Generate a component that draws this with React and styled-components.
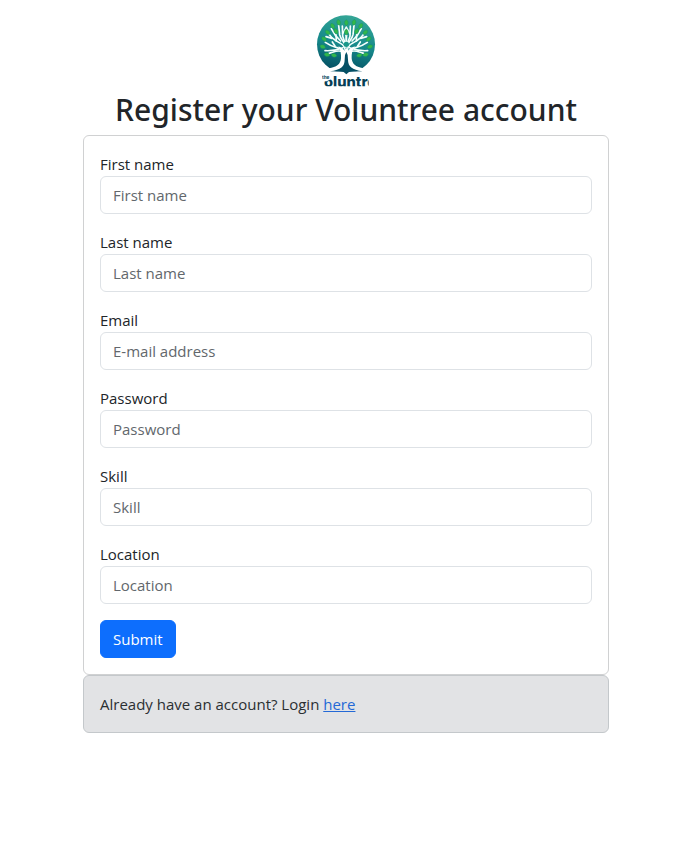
import React from 'react';
import styled, { createGlobalStyle } from 'styled-components';

const GlobalStyle = createGlobalStyle`
  *, *::before, *::after { box-sizing: border-box; }
  body {
    margin: 0;
    background: #fff;
    color: #212529;
    font-family: "Segoe UI", "Open Sans", "Noto Sans", sans-serif;
    font-size: 15px;
    line-height: 24px;
  }
`;

const Page = styled.main`
  display: flex;
  flex-direction: column;
  align-items: center;
  padding: 14px 16px 24px 12px;
`;

const Logo = styled.svg`
  display: block;
  width: 60px;
  height: 75px;
`;

const Title = styled.h1`
  margin: 0 0 4px;
  font-family: "Segoe UI", "Noto Sans", "Open Sans", sans-serif;
  font-size: 30px;
  font-weight: 500;
  line-height: 42px;
  text-align: center;
`;

const Card = styled.form`
  display: flex;
  flex-direction: column;
  align-items: flex-start;
  gap: 16px;
  width: 100%;
  max-width: 526px;
  padding: 16px;
  border: 1px solid #d0d1d2;
  border-radius: 6px;
`;

const Field = styled.div`
  display: flex;
  flex-direction: column;
  align-items: flex-start;
  width: 100%;
`;

const Input = styled.input`
  width: 100%;
  height: 38px;
  padding: 6px 12px;
  border: 1px solid #dee2e6;
  border-radius: 6px;
  background: #fff;
  color: #212529;
  font: inherit;

  &::placeholder { color: #62676c; opacity: 1; }
`;

const SubmitButton = styled.button`
  height: 38px;
  padding: 6px 12px;
  border: 1px solid #0d6efd;
  border-radius: 6px;
  background: #0d6efd;
  color: #fff;
  font: inherit;
  cursor: pointer;
`;

const LoginNote = styled.p`
  width: 100%;
  max-width: 526px;
  margin: 0;
  padding: 16px;
  border: 1px solid #c4c8cb;
  border-radius: 6px;
  background: #e2e3e5;
  color: #2b2f32;
`;

const Link = styled.a`
  color: #2469d6;
  text-decoration: underline;
`;

const fields = [
  { id: 'first-name', label: 'First name', placeholder: 'First name', type: 'text' },
  { id: 'last-name', label: 'Last name', placeholder: 'Last name', type: 'text' },
  { id: 'email', label: 'Email', placeholder: 'E-mail address', type: 'email' },
  { id: 'password', label: 'Password', placeholder: 'Password', type: 'password' },
  { id: 'skill', label: 'Skill', placeholder: 'Skill', type: 'text' },
  { id: 'location', label: 'Location', placeholder: 'Location', type: 'text' },
];

// Each leaf: centre x, centre y, rotation in degrees.
const leaves = [
  [121, 44, 0], [98, 43, -15], [144, 43, 15], [80, 54, -35], [164, 54, 35],
  [121, 72, 0], [90, 70, -25], [152, 70, 25], [65, 73, -50], [178, 73, 50],
  [54, 93, -50], [188, 93, 50], [50, 116, -70], [192, 116, 70],
  [63, 140, -75], [179, 140, 75], [84, 142, -75], [160, 142, 75],
];

// Right-hand branches, mirrored about the trunk for the left side.
const branches = [
  'M124 128C126 112 134 108 151 99Q166 90 172 80',
  'M127 131C136 117 158 122 184 103',
  'M131 119Q158 130 185 128',
  'M127 132Q145 126 160 132L173 136',
  'M123 117C126 100 138 96 141 80L144 52',
  'M138 99L154 82L166 62',
  'M124 107L132 85L133 54',
  'M121 103V82',
  'M151 99L152 80',
  'M164 91L182 86',
  'M155 114L163 102',
  'M132 77L121 58',
];

function VoluntreeLogo() {
  const crown = branches.map((d) => <path key={d} d={d} />);
  return (
    <Logo viewBox="30 18 180 225" role="img" aria-label="The Voluntree">
      <defs>
        <linearGradient id="disc" x1="0.6" y1="0" x2="0.4" y2="1">
          <stop offset="0" stopColor="#35a696" />
          <stop offset="0.5" stopColor="#16898b" />
          <stop offset="1" stopColor="#034b60" />
        </linearGradient>
        <clipPath id="badge"><path d="M30 18H210V190H30Z" /></clipPath>
        <clipPath id="wordmark"><path d="M48 202H188V235H48Z" /></clipPath>
      </defs>
      <g clipPath="url(#badge)">
        <circle cx="120" cy="109" r="87" fill="url(#disc)" />
        <g fill="none" stroke="#f4fffc" strokeWidth="5" strokeLinecap="round" strokeLinejoin="round">
          <g>{crown}</g>
          <g transform="translate(242 0) scale(-1 1)">{crown}</g>
        </g>
        <path fill="#fff" d="M97 115Q112 121 115 130L121 119L127 130Q130 121 147 115Q136 129 137 151C138 168 150 178 174 181L192 190H50L68 181C92 178 104 168 105 151Q106 129 97 115Z" />
        <circle cx="121" cy="109" r="8" fill="#19988a" />
        <g fill="#32b64c" stroke="#129060" strokeWidth="1">
          {leaves.map(([x, y, angle]) => (
            <path
              key={`${x}-${y}`}
              transform={`translate(${x} ${y}) rotate(${angle})`}
              d="M0-9C8-4 7 5 0 9C-7 5-8-4 0-9Z"
            />
          ))}
        </g>
      </g>
      <path fill="#055065" d="M121 132Q115 140 116 155C116 175 105 185 72 190Q102 190 113 192L121 199L129 192Q140 190 170 190C138 185 126 175 126 155Q127 140 121 132Z" />
      <g clipPath="url(#wordmark)" fill="#073f57" fontFamily="Inter, sans-serif">
        <text x="54" y="238" fontSize="44" fontWeight="800">oluntre</text>
        <path fill="#fff" d="M48 202H75V214L62 220H48Z" />
        <text x="48" y="213" fontSize="14" fontWeight="700">the</text>
      </g>
    </Logo>
  );
}

export default function App() {
  return (
    <>
      <GlobalStyle />
      <Page>
        <VoluntreeLogo />
        <Title>Register your Voluntree account</Title>
        <Card onSubmit={(event) => event.preventDefault()}>
          {fields.map(({ id, label, placeholder, type }) => (
            <Field key={id}>
              <label htmlFor={id}>{label}</label>
              <Input id={id} name={id} type={type} placeholder={placeholder} />
            </Field>
          ))}
          <SubmitButton type="submit">Submit</SubmitButton>
        </Card>
        <LoginNote>
          Already have an account? Login <Link href="#login">here</Link>
        </LoginNote>
      </Page>
    </>
  );
}
